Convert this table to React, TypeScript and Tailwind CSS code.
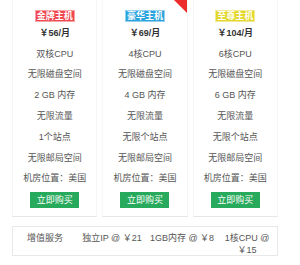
import React from "react";

type Plan = {
    name: string;
    tagClass: string;
    price: string;
    features: string[];
    hot?: boolean;
};

const plans: Plan[] = [
    {
        name: "金牌主机",
        tagClass: "bg-[#f04650] border-[#f7a3a6]",
        price: "￥56/月",
        features: ["双核CPU", "无限磁盘空间", "2 GB 内存", "无限流量", "1个站点", "无限邮局空间", "机房位置：美国"],
    },
    {
        name: "豪华主机",
        tagClass: "bg-[#2aa3dd] border-[#93d0ee]",
        price: "￥69/月",
        features: ["4核CPU", "无限磁盘空间", "4 GB 内存", "无限流量", "无限个站点", "无限邮局空间", "机房位置：美国"],
        hot: true,
    },
    {
        name: "至尊主机",
        tagClass: "bg-[#e4d72a] border-[#f1ea95]",
        price: "￥104/月",
        features: ["6核CPU", "无限磁盘空间", "6 GB 内存", "无限流量", "无限个站点", "无限邮局空间", "机房位置：美国"],
    },
];

const extras = [
    { label: "增值服务", w: "w-[64px]" },
    { label: "独立IP @ ￥21", w: "w-[70px]" },
    { label: "1GB内存 @ ￥8", w: "w-[70px]" },
    { label: "1核CPU @ ￥15", w: "w-[60px]" },
];

const PlanCard: React.FC<{ plan: Plan }> = ({ plan }) => {
    return (
        <div className="relative overflow-hidden flex flex-col items-center border-x border-x-[#f6f6f6] border-b border-b-[#e6e6e6] pb-[8px]">
            {plan.hot && (
                <svg className="absolute top-0 right-0" width="13" height="13" viewBox="0 0 13 13">
                    <polygon points="0,0 13,0 13,13" fill="#ec2b2b" />
                </svg>
            )}
            <div className={`mt-[10px] h-[12px] px-[1px] border text-white text-[9px] leading-[10px] font-bold ${plan.tagClass}`}>
                {plan.name}
            </div>
            <div className="h-[20px] mt-[2px] flex items-center text-[9px] font-bold text-[#333]">{plan.price}</div>
            {plan.features.map((f) => (
                <div key={f} className="h-[20.8px] flex items-center text-[9px] text-[#555]">
                    {f}
                </div>
            ))}
            <button className="mt-[2.5px] w-[49px] h-[16px] bg-[#28aa5c] text-white text-[9px] leading-[16px]">
                立即购买
            </button>
        </div>
    );
};

const App: React.FC = () => {
    return (
        <div
            className="w-[300px] h-[265px] bg-white px-[12px] pr-[22px]"
            style={{ fontFamily: '"Liberation Sans", "Noto Sans CJK SC", sans-serif' }}
        >
            <div className="grid grid-cols-3 gap-x-[5px]">
                {plans.map((p) => (
                    <PlanCard key={p.name} plan={p} />
                ))}
            </div>
            <div className="mt-[9px] h-[30px] flex border border-[#e8e8e8] text-[9px] text-[#555]">
                {extras.map((e) => (
                    <div key={e.label} className={`${e.w} pt-[5px] leading-[12px] text-center`}>
                        {e.label}
                    </div>
                ))}
            </div>
        </div>
    );
};

export default App;
